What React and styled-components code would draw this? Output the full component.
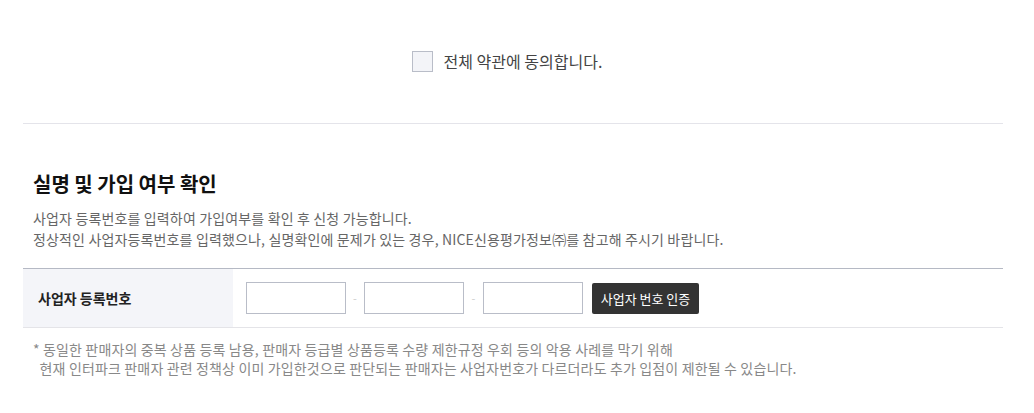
import React from 'react';
import styled, { createGlobalStyle } from 'styled-components';

const GlobalStyle = createGlobalStyle`
  body {
    margin: 0;
    background: #fff;
    font-family: "Noto Sans CJK KR", "Noto Sans", sans-serif;
    color: #333;
  }
`;

const Wrapper = styled.div`
  width: 980px;
  margin-left: 23px;
`;

const Agree = styled.div`
  display: flex;
  align-items: center;
  justify-content: center;
  padding: 50px 12px 51px 0;
  border-bottom: 1px solid #e4e4ea;

  label {
    display: flex;
    align-items: center;
    gap: 11px;
    font-size: 16px;
    line-height: 22px;
    color: #444;
    cursor: pointer;
  }
`;

const CheckBox = styled.span`
  width: 19px;
  height: 19px;
  border: 1px solid #b9bdc8;
  background: #f3f4f8;
`;

const Section = styled.div`
  padding-top: 46px;
`;

const Title = styled.h2`
  margin: 0 0 0 10px;
  font-size: 20px;
  font-weight: 700;
  color: #111;
  line-height: 28px;
`;

const Desc = styled.p`
  margin: 10px 0 0 10px;
  font-size: 14px;
  letter-spacing: 0.15px;
  line-height: 21px;
  color: #666;
`;

const Table = styled.div`
  display: flex;
  margin-top: 18px;
  height: 58px;
  border-top: 1px solid #b5b9c4;
  border-bottom: 1px solid #e4e4e8;
`;

const Label = styled.div`
  width: 195px;
  padding-left: 15px;
  display: flex;
  align-items: center;
  background: #f4f5f9;
  font-size: 14px;
  font-weight: 700;
  color: #222;
`;

const Field = styled.div`
  display: flex;
  align-items: center;
  padding-left: 13px;
`;

const Input = styled.input`
  box-sizing: border-box;
  width: 100px;
  height: 32px;
  border: 1px solid #b9bdc8;
  outline: none;
  padding: 0 8px;
  font-size: 13px;
`;

const Dash = styled.span`
  width: ${p => p.$w}px;
  text-align: center;
  font-size: 11px;
  color: #ccc;
`;

const Button = styled.button`
  margin-left: 9px;
  width: 107px;
  height: 31px;
  border: 0;
  border-radius: 2px;
  background: #333;
  color: #fff;
  font-family: inherit;
  font-size: 13px;
  cursor: pointer;
`;

const Notes = styled.p`
  margin: 12px 0 0 10px;
  font-size: 14px;
  letter-spacing: 0.15px;
  line-height: 19px;
  color: #888;
  white-space: pre;
`;

export default function App() {
  return (
    <>
      <GlobalStyle />
      <Wrapper>
        <Agree>
          <label>
            <CheckBox />
            전체 약관에 동의합니다.
          </label>
        </Agree>
        <Section>
          <Title>실명 및 가입 여부 확인</Title>
          <Desc>
            사업자 등록번호를 입력하여 가입여부를 확인 후 신청 가능합니다.<br />
            정상적인 사업자등록번호를 입력했으나, 실명확인에 문제가 있는 경우, NICE신용평가정보㈜를 참고해 주시기 바랍니다.
          </Desc>
          <Table>
            <Label>사업자 등록번호</Label>
            <Field>
              <Input />
              <Dash $w={18}>-</Dash>
              <Input />
              <Dash $w={19}>-</Dash>
              <Input />
              <Button>사업자 번호 인증</Button>
            </Field>
          </Table>
          <Notes>
            {'* 동일한 판매자의 중복 상품 등록 남용, 판매자 등급별 상품등록 수량 제한규정 우회 등의 악용 사례를 막기 위해\n  현재 인터파크 판매자 관련 정책상 이미 가입한것으로 판단되는 판매자는 사업자번호가 다르더라도 추가 입점이 제한될 수 있습니다.'}
          </Notes>
        </Section>
      </Wrapper>
    </>
  );
}
